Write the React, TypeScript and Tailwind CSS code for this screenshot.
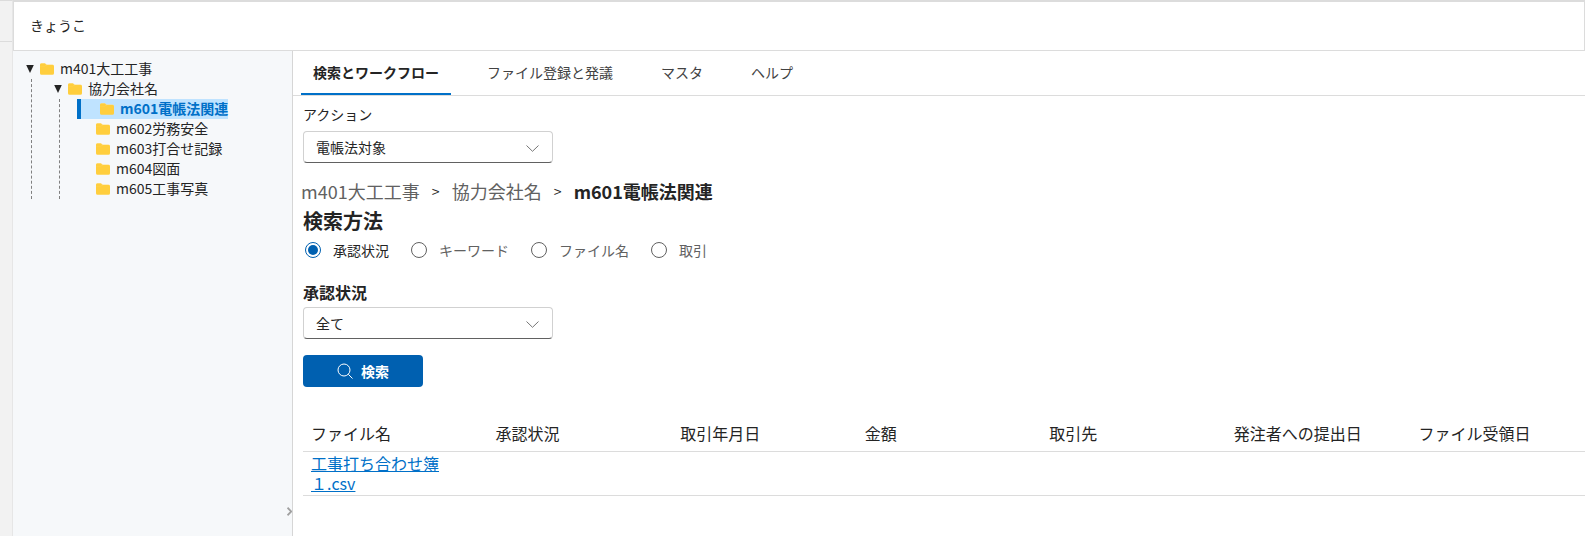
import { useState } from 'react'
import clsx from 'clsx'

const TABS = ['検索とワークフロー', 'ファイル登録と発議', 'マスタ', 'ヘルプ']
const FOLDERS = ['m601電帳法関連', 'm602労務安全', 'm603打合せ記録', 'm604図面', 'm605工事写真']
const SEARCH_METHODS = ['承認状況', 'キーワード', 'ファイル名', '取引']
const COLUMNS = ['ファイル名', '承認状況', '取引年月日', '金額', '取引先', '発注者への提出日', 'ファイル受領日']

const FolderIcon = () => (
  <svg className="mr-1.5 mt-0.5 shrink-0" width="14" height="12" viewBox="0 0 14 12" aria-hidden="true">
    <path d="M0 2Q0 0.3 1.6 0.3H5L6.8 1.6H12.4Q14 1.6 14 3.4V5H0Z" fill="#ffdf85" />
    <path d="M0 3.2H4.6Q5.4 3.2 6 2.6L6.8 2H12.4Q14 2 14 3.4V10.2Q14 11.8 12.4 11.8H1.6Q0 11.8 0 10.2Z" fill="#ffce3d" />
    <path d="M0 2Q0 0.6 1.4 0.6H4.8L6.4 2L4.8 3.4H0Z" fill="#ffce3d" />
  </svg>
)

const Caret = () => (
  <svg className="ml-px mr-1.5 mt-0.5 shrink-0" width="8" height="8" viewBox="0 0 8 8" aria-hidden="true">
    <path d="M0.2 0H7.8L4 8Z" fill="#242424" />
  </svg>
)

interface DropdownProps {
  id: string
  options: string[]
}

const Dropdown: React.FC<DropdownProps> = ({ id, options }) => (
  <div className="relative w-[250px]">
    <select
      id={id}
      className="block h-8 w-full appearance-none rounded border border-[#d1d1d1] border-b-[#616161] bg-white px-3 text-sm text-[#242424]"
    >
      {options.map((option) => (
        <option key={option}>{option}</option>
      ))}
    </select>
    <svg
      className="pointer-events-none absolute right-3.5 top-3.5"
      width="13"
      height="7"
      viewBox="0 0 13 7"
      fill="none"
      stroke="#757575"
      aria-hidden="true"
    >
      <path d="M0.5 0.5L6.5 6.3L12.5 0.5" />
    </svg>
  </div>
)

const FolderTree = () => {
  const [selected, setSelected] = useState(FOLDERS[0])

  return (
    <ul className="pl-3 pt-2 text-sm text-[#242424]">
      <li>
        <div className="flex h-5 items-center pb-0.5">
          <Caret />
          <FolderIcon />
          m401大工工事
        </div>
        <ul className="ml-1.5 border-l border-dashed border-[#808080] pl-[21px]">
          <li>
            <div className="flex h-5 items-center pb-0.5">
              <Caret />
              <FolderIcon />
              協力会社名
            </div>
            <ul className="ml-1.5 border-l border-dashed border-[#808080] pl-[17px]">
              {FOLDERS.map((folder) => (
                <li key={folder}>
                  <button
                    type="button"
                    onClick={() => setSelected(folder)}
                    className={clsx(
                      'flex h-5 items-center whitespace-nowrap pb-0.5 pl-[19px]',
                      folder === selected && 'border-l-4 border-[#0070c8] bg-[#bfe3ff] font-bold text-[#0070c8]'
                    )}
                  >
                    <FolderIcon />
                    {folder}
                  </button>
                </li>
              ))}
            </ul>
          </li>
        </ul>
      </li>
    </ul>
  )
}

const Breadcrumb = () => (
  <nav aria-label="パンくず" className="-ml-0.5 mt-4 flex h-6 items-center text-lg text-[#616161]">
    <a href="#m401">m401大工工事</a>
    <span className="w-8 text-center text-sm text-[#242424]">&gt;</span>
    <a href="#partner">協力会社名</a>
    <span className="w-8 text-center text-sm text-[#242424]">&gt;</span>
    <span className="font-bold text-[#242424]">m601電帳法関連</span>
  </nav>
)

export default function App() {
  const [tab, setTab] = useState(TABS[0])
  const [method, setMethod] = useState(SEARCH_METHODS[0])

  return (
    <div className="flex min-h-screen bg-white font-['Noto_Sans_CJK_JP',sans-serif] text-[#242424]">
      <div className="w-[13px] shrink-0 border-r border-t border-r-[#e6e6e6] border-t-[#dcdcdc] bg-[#f2f2f2]">
        <div className="h-[41px] border-b border-[#dcdcdc]" />
      </div>

      <div className="flex min-w-0 flex-1 flex-col">
        <header className="flex h-[51px] items-center border border-t-2 border-[#dcdcdc] px-4 pb-0.5 text-sm">
          きょうこ
        </header>

        <div className="flex flex-1">
          <aside className="flex w-[280px] shrink-0 flex-col border-r border-[#d6d6d6] bg-[#f6f8fa]">
            <FolderTree />
            <button type="button" aria-label="開く" className="mb-5 mt-auto self-end">
              <svg width="5" height="9" viewBox="0 0 5 9" fill="none" stroke="#a0a0a0" strokeWidth="1.8" aria-hidden="true">
                <path d="M0.5 0.7L4.3 4.5L0.5 8.3" />
              </svg>
            </button>
          </aside>

          <main className="min-w-0 flex-1 overflow-x-hidden">
            <div role="tablist" className="flex h-[45px] gap-6 border-b border-[#dcdcdc] pl-2 text-sm">
              {TABS.map((name) => (
                <button
                  key={name}
                  type="button"
                  role="tab"
                  aria-selected={name === tab}
                  onClick={() => setTab(name)}
                  className={clsx(
                    'border-b-2 px-3',
                    name === tab ? 'border-[#0070c8] font-bold' : 'border-transparent text-[#424242]'
                  )}
                >
                  {name}
                </button>
              ))}
            </div>

            <div className="pl-2.5 pt-2">
              <label htmlFor="action" className="mb-[7px] block text-sm">
                アクション
              </label>
              <Dropdown id="action" options={['電帳法対象']} />

              <Breadcrumb />

              <h2 className="mt-1 text-xl font-bold">検索方法</h2>
              <fieldset className="mt-[5px] flex gap-[22px] pl-0.5 text-sm">
                {SEARCH_METHODS.map((name) => (
                  <label
                    key={name}
                    className={clsx('flex items-center gap-3', name === method ? 'text-[#242424]' : 'text-[#616161]')}
                  >
                    <input
                      type="radio"
                      name="method"
                      checked={name === method}
                      onChange={() => setMethod(name)}
                      className="flex size-4 appearance-none items-center justify-center rounded-full border border-[#616161] before:size-2.5 before:rounded-full checked:border-[#0060b0] checked:before:bg-[#0060b0]"
                    />
                    {name}
                  </label>
                ))}
              </fieldset>

              <label htmlFor="status" className="mb-[3px] mt-5 block text-base font-bold">
                承認状況
              </label>
              <Dropdown id="status" options={['全て']} />

              <button
                type="button"
                className="mt-4 flex h-8 w-[120px] items-center justify-center gap-2 rounded bg-[#0060b0] text-sm font-bold text-white"
              >
                <svg width="16" height="16" viewBox="0 0 16 16" fill="none" stroke="currentColor" aria-hidden="true">
                  <circle cx="7" cy="7" r="6" />
                  <path d="M11.3 11.3L15.5 15.5" />
                </svg>
                検索
              </button>

              <table className="mt-7 w-[calc(100%+10px)] table-fixed text-left text-base leading-5">
                <thead>
                  <tr className="h-9 border-b border-[#dcdcdc]">
                    {COLUMNS.map((column) => (
                      <th key={column} className="px-2 font-normal">
                        {column}
                      </th>
                    ))}
                  </tr>
                </thead>
                <tbody>
                  <tr className="h-11 border-b border-[#dcdcdc]">
                    <td className="px-2">
                      <a href="#file" className="block w-[130px] text-[#0070c8] underline">
                        工事打ち合わせ簿１.csv
                      </a>
                    </td>
                    {COLUMNS.slice(1).map((column) => (
                      <td key={column} />
                    ))}
                  </tr>
                </tbody>
              </table>
            </div>
          </main>
        </div>
      </div>
    </div>
  )
}
